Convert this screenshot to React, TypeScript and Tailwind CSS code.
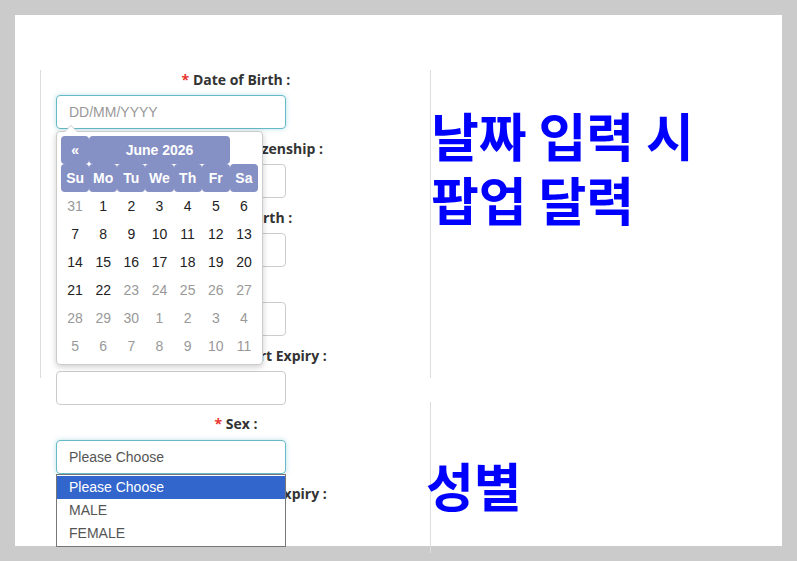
import React from "react";

// ─── Form content ─────────────────────────────────────────────────────────────

const TOP_ROWS = [
  { label: "Date of Birth :", placeholder: "DD/MM/YYYY", focused: true },
  { label: "Country of Citizenship :" },
  { label: "Place of Birth :" },
  { label: "" },
  { label: "Date of Passport Expiry :" },
];

const WEEK_DAYS = ["Su", "Mo", "Tu", "We", "Th", "Fr", "Sa"];

// [day, muted]
const WEEKS: [number, boolean][][] = [
  [[31, true], [1, false], [2, false], [3, false], [4, false], [5, false], [6, false]],
  [[7, false], [8, false], [9, false], [10, false], [11, false], [12, false], [13, false]],
  [[14, false], [15, false], [16, false], [17, false], [18, false], [19, false], [20, false]],
  [[21, false], [22, false], [23, true], [24, true], [25, true], [26, true], [27, true]],
  [[28, true], [29, true], [30, true], [1, true], [2, true], [3, true], [4, true]],
  [[5, true], [6, true], [7, true], [8, true], [9, true], [10, true], [11, true]],
];

const SEX_OPTIONS = ["Please Choose", "MALE", "FEMALE"];

const LABEL = "block h-[20px] w-[360px] text-center font-['Open_Sans',sans-serif] text-[14px] font-bold leading-[20px] text-[#333]";
const INPUT_BASE = "h-[34px] w-[230px] rounded-[4px] border px-[12px] font-['Liberation_Sans',Arial,sans-serif] text-[14px] leading-[32px]";
const BIG_KO = "font-['Noto_Sans_CJK_KR',sans-serif] text-[52px] font-bold leading-[64px] text-[#0000ff]";

export default function App() {
  return (
    <div className="h-[561px] w-[797px] overflow-hidden bg-[#cbcbcb] pl-[15px] pt-[15px]">
      <div className="h-[531px] w-[767px] bg-white pl-[25px] pt-[55px]">

        {/* ── Date section ── */}
        <div className="flex h-[308px]">
          <div className="relative w-[390px] border-l border-[#ddd] pl-[15px]">
            {TOP_ROWS.map((row, i) => (
              <div key={i} className="mb-[10px]">
                <FieldLabel text={row.label} />
                <div
                  className={`${INPUT_BASE} mt-[5px] ${
                    row.focused
                      ? "border-[#66b9c6] text-[#999] shadow-[0_0_5px_rgba(102,185,198,0.45)]"
                      : "border-[#ccc]"
                  }`}
                >
                  {row.placeholder ?? ""}
                </div>
              </div>
            ))}
            <DatePicker />
          </div>

          <div className="border-l border-[#ddd] pt-[33px]">
            <p className={BIG_KO}>
              날짜 입력 시
              <br />
              팝업 달력
            </p>
          </div>
        </div>

        {/* ── Sex section ── */}
        <div className="mt-[24px] flex h-[151px]">
          <div className="relative w-[390px] pl-[16px] pt-[12px]">
            <div className="mb-[10px]">
              <FieldLabel text="Sex :" />
              <div className={`${INPUT_BASE} mt-[6px] border-[#66b9c6] text-[#555] shadow-[0_0_5px_rgba(102,185,198,0.45)]`}>
                Please Choose
              </div>
            </div>
            <div>
              <FieldLabel text="Date of Passport Expiry :" />
              <div className={`${INPUT_BASE} mt-[5px] border-[#ccc]`} />
            </div>

            {/* Open native list */}
            <ul className="absolute left-[16px] top-[72px] w-[230px] border border-[#777] bg-white py-[1px] font-['Liberation_Sans',Arial,sans-serif] text-[14px]">
              {SEX_OPTIONS.map((opt, i) => (
                <li
                  key={opt}
                  className={`h-[23px] pl-[12px] leading-[23px] ${
                    i === 0 ? "bg-[#3366cc] text-white" : "text-[#555]"
                  }`}
                >
                  {opt}
                </li>
              ))}
            </ul>
          </div>

          <div className="h-[151px] border-l border-[#ddd] pt-[51px]">
            <p className={`-ml-[5px] ${BIG_KO}`}>성별</p>
          </div>
        </div>

      </div>
    </div>
  );
}

// ─── Helpers ──────────────────────────────────────────────────────────────────

function FieldLabel({ text }: { text: string }) {
  return (
    <label className={LABEL}>
      {text ? (
        <>
          <span className="text-[#e8332e]">*</span> {text}
        </>
      ) : (
        "\u00a0"
      )}
    </label>
  );
}

function DatePicker() {
  const head = "flex h-[28px] items-center justify-center rounded-[4px] bg-[#8590c5] font-bold text-white";
  return (
    <div className="absolute left-[15px] top-[61px] z-10 w-[207px] rounded-[4px] border border-[#ccc] bg-white p-[4px] font-['Liberation_Sans',Arial,sans-serif] text-[14px] shadow-[0_2px_6px_rgba(0,0,0,0.2)]">
      {/* caret */}
      <span className="absolute -top-[7px] left-[7px] h-0 w-0 border-x-[7px] border-b-[7px] border-x-transparent border-b-[#ccc]" />
      <span className="absolute -top-[6px] left-[8px] h-0 w-0 border-x-[6px] border-b-[6px] border-x-transparent border-b-white" />

      <div className="grid grid-cols-7">
        <div className={head}>«</div>
        <div className={`${head} col-span-5`}>June 2026</div>
        <div />
        {WEEK_DAYS.map((d) => (
          <div key={d} className={head}>
            {d}
          </div>
        ))}
        {WEEKS.flat().map(([day, muted], i) => (
          <div
            key={i}
            className={`flex h-[28px] items-center justify-center ${muted ? "text-[#999]" : "text-[#222]"}`}
          >
            {day}
          </div>
        ))}
      </div>
    </div>
  );
}
